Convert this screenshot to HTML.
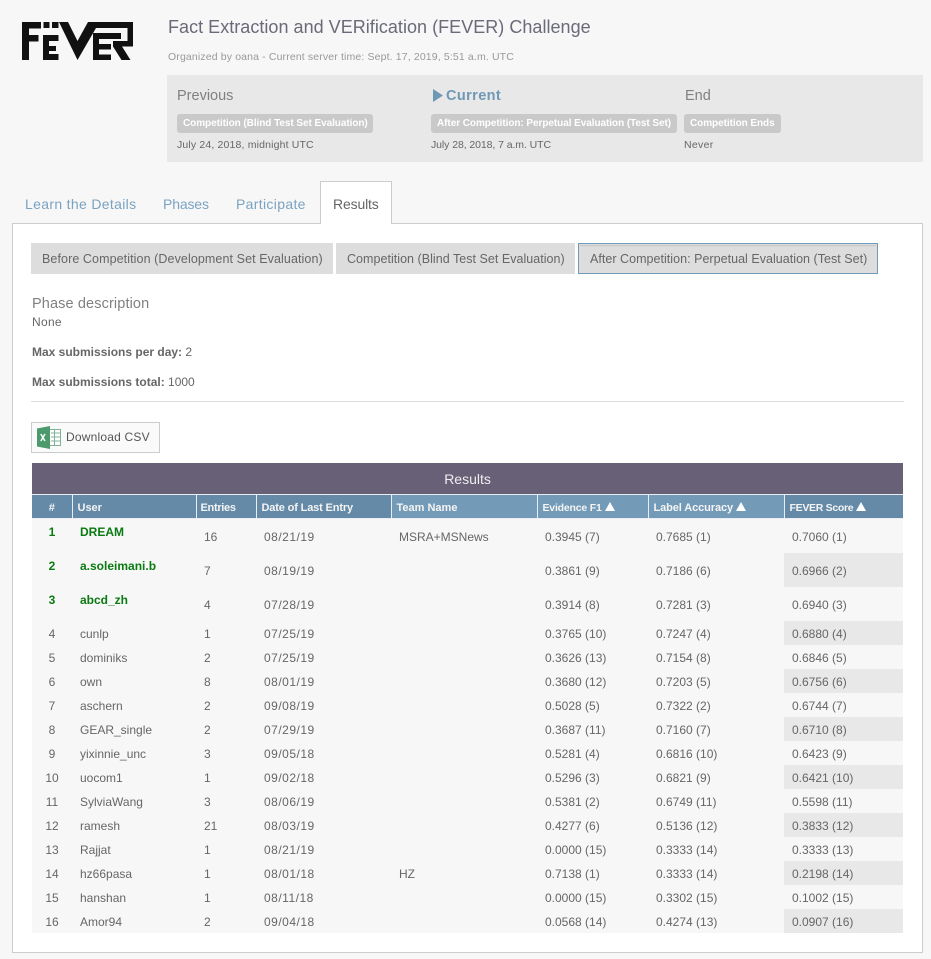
<!DOCTYPE html>
<html><head><meta charset="utf-8"><title>FEVER</title>
<style>
html,body{margin:0;padding:0;background:#f7f7f7}
body{width:931px;height:959px;position:relative;overflow:hidden;font-family:"Liberation Sans",sans-serif;color:#666;font-size:12px}
.a{position:absolute;white-space:nowrap}
.badge{position:absolute;height:19px;top:114px;background:#c9c9c9;border-radius:3px;color:#fff;font-weight:bold;font-size:10px;line-height:20px;padding-left:6px;box-sizing:border-box;white-space:nowrap;letter-spacing:-.06px}
.btn{position:absolute;top:243px;height:31px;background:#ddd;color:#666;font-size:12.5px;line-height:33px;box-sizing:border-box;white-space:nowrap}
table{position:absolute;left:32px;top:463px;width:871px;border-collapse:collapse;table-layout:fixed;background:#f7f7f7}
td,th{padding:0;white-space:nowrap;overflow:visible}
.t{height:31px;background:#676077;color:#eee;font-weight:normal;font-size:14px;text-align:center;border-bottom:1px solid #e8eef3}
.h th{height:24px;color:#f4f4f4;font-size:11px;font-weight:bold;text-align:left;padding:2px 0 0 5px;background:#648aa8;border-left:1px solid #e8eef3;border-bottom:1px solid #e8eef3;box-sizing:border-box}
.h th:first-child{border-left:0;text-align:center;padding:2px 0 0}
.h .l{background:#739bb8}
.tri{display:inline-block;width:0;height:0;border-left:5.5px solid transparent;border-right:5.5px solid transparent;border-bottom:9px solid #fff;margin-left:3px;vertical-align:0}
tbody tr td{height:24px;color:#666;line-height:22px;padding-top:2px;box-sizing:border-box}
tbody tr.b td{height:34px}
td:nth-child(1){text-align:center}
td:nth-child(2){padding-left:8px}
td:nth-child(3){padding-left:8px}
td:nth-child(4){padding-left:8px;letter-spacing:.5px}
td:nth-child(5){padding-left:8px}
td:nth-child(6),td:nth-child(7),td:nth-child(8){padding-left:8px}
tr.s td:nth-child(8){background:#e8e8e8}
tr.b td:nth-child(1),tr.b td:nth-child(2){color:#0a7a12;position:relative;top:-5px;font-weight:bold}
</style></head><body>

<svg class="a" style="left:0;top:0" width="140" height="70" viewBox="0 0 140 70">
<path fill="#111" d="M22 22H41V28.500H29V35H38.500V41.500H29V60H22Z"/>
<path fill="#111" d="M43.500 22H49.500V28H43.500ZM52 22H58.500V28H52ZM43 35H58.500V41H49V46H56V51H49V54H58.500V60H43Z"/>
<path fill="#111" d="M59 22H68L77.500 41L88 22H133V46.500H122L130.500 60H121.500L113 46.500V41H127.500V28H96L77.500 60Z"/>
<path fill="#111" d="M93 33H121V39H99V44H111V49.500H99V54.500H111V60H93Z"/>
</svg>

<div class="a" style="left:168px;top:16px;font-size:18px;line-height:22px;color:#6a6a78;letter-spacing:.03px">Fact Extraction and VERification (FEVER) Challenge</div>
<div class="a" style="left:168px;top:50px;font-size:10.5px;line-height:14px;color:#999;letter-spacing:.14px">Organized by oana - Current server time: Sept. 17, 2019, 5:51 a.m. UTC</div>

<div class="a" style="left:167px;top:75px;width:756px;height:87px;background:#e8e8e8"></div>
<div class="a" style="left:177px;top:87px;font-size:14.5px;line-height:19px;color:#808080">Previous</div>
<svg class="a" style="left:433px;top:89px" width="10" height="13"><path fill="#6f98b5" d="M0 0L10 6.5L0 13Z"/></svg>
<div class="a" style="left:446px;top:87px;font-size:14.5px;line-height:19px;color:#6f98b5;font-weight:bold;letter-spacing:.4px">Current</div>
<div class="a" style="left:685px;top:87px;font-size:14.5px;line-height:19px;color:#808080">End</div>
<div class="badge" style="left:177px;width:196px">Competition (Blind Test Set Evaluation)</div>
<div class="badge" style="left:431px;width:246px">After Competition: Perpetual Evaluation (Test Set)</div>
<div class="badge" style="left:684px;width:97px">Competition Ends</div>
<div class="a" style="left:177px;top:138px;font-size:10.5px;line-height:14px;color:#666;letter-spacing:.16px">July 24, 2018, midnight UTC</div>
<div class="a" style="left:431px;top:138px;font-size:10.5px;line-height:14px;color:#666;letter-spacing:-.08px">July 28, 2018, 7 a.m. UTC</div>
<div class="a" style="left:684px;top:138px;font-size:10.5px;line-height:14px;color:#666;letter-spacing:.3px">Never</div>

<div class="a" style="left:12px;top:223px;width:911px;height:730px;background:#fff;border:1px solid #ccc;box-sizing:border-box"></div>
<div class="a" style="left:320px;top:181px;width:72px;height:43px;background:#fff;border:1px solid #ccc;border-bottom:0;box-sizing:border-box"></div>
<div class="a" style="left:25px;top:195px;font-size:14px;line-height:19px;color:#7ba3c0;letter-spacing:.33px">Learn the Details</div>
<div class="a" style="left:163px;top:195px;font-size:14px;line-height:19px;color:#7ba3c0;letter-spacing:-.15px">Phases</div>
<div class="a" style="left:236px;top:195px;font-size:14px;line-height:19px;color:#7ba3c0;letter-spacing:.33px">Participate</div>
<div class="a" style="left:333px;top:195px;font-size:14px;line-height:19px;color:#666;letter-spacing:-.15px">Results</div>

<div class="btn" style="left:31px;width:302px;padding-left:11px;letter-spacing:.09px">Before Competition (Development Set Evaluation)</div>
<div class="btn" style="left:336px;width:239px;padding-left:11px;letter-spacing:.03px">Competition (Blind Test Set Evaluation)</div>
<div class="btn" style="left:578px;width:300px;padding-left:11px;border:1px solid #6e9abb;box-shadow:inset 0 0 0 1px #ddd,inset 0 2px 1px #c4c4c4;line-height:31px;letter-spacing:.03px">After Competition: Perpetual Evaluation (Test Set)</div>

<div class="a" style="left:32px;top:295px;font-size:14.5px;line-height:19px;color:#808080;letter-spacing:.12px">Phase description</div>
<div class="a" style="left:32px;top:315px;line-height:15px;letter-spacing:.3px">None</div>
<div class="a" style="left:32px;top:345px;line-height:15px"><b>Max submissions per day:</b> 2</div>
<div class="a" style="left:32px;top:375px;line-height:15px"><b>Max submissions total:</b> 1000</div>
<div class="a" style="left:31px;top:401px;width:873px;height:1px;background:#ddd"></div>

<div class="a" style="left:31px;top:422px;width:129px;height:31px;background:#fafafa;border:1px solid #ccc;box-sizing:border-box"></div>
<svg class="a" style="left:37px;top:426px" width="24" height="23" viewBox="0 0 24 23">
<path fill="#fff" stroke="#7fb394" d="M10 3.500H23.500V19.500H10Z"/>
<path stroke="#7fb394" fill="none" d="M14 7H23M14 11H23M14 15H23M17.500 4V19"/>
<path fill="#4c9a6c" d="M0 2.500L13 0V23L0 20.500Z"/>
<path stroke="#fff" stroke-width="1.400" fill="none" d="M3.800 8L8 15M8 8L3.800 15"/>
</svg>
<div class="a" style="left:66px;top:430px;line-height:15px;color:#555;letter-spacing:.2px">Download CSV</div>

<table>
<colgroup><col style="width:40px"><col style="width:124px"><col style="width:60px"><col style="width:135px"><col style="width:146px"><col style="width:111px"><col style="width:136px"><col style="width:119px"></colgroup>
<thead>
<tr><th class="t" colspan="8">Results</th></tr>
<tr class="h"><th>#</th><th>User</th><th style="padding-left:4px;letter-spacing:-.3px">Entries</th><th style="letter-spacing:-.15px">Date of Last Entry</th><th class="l">Team Name</th><th class="l" style="font-size:10.500px;letter-spacing:-.2px">Evidence F1<span class="tri"></span></th><th class="l" style="letter-spacing:-.1px">Label Accuracy<span class="tri"></span></th><th style="font-size:10.500px;letter-spacing:-.3px">FEVER Score<span class="tri"></span></th></tr>
</thead>
<tbody>
<tr class="b"><td>1</td><td>DREAM</td><td>16</td><td>08/21/19</td><td>MSRA+MSNews</td><td>0.3945 (7)</td><td>0.7685 (1)</td><td>0.7060 (1)</td></tr>
<tr class="b s"><td>2</td><td>a.soleimani.b</td><td>7</td><td>08/19/19</td><td></td><td>0.3861 (9)</td><td>0.7186 (6)</td><td>0.6966 (2)</td></tr>
<tr class="b"><td>3</td><td>abcd_zh</td><td>4</td><td>07/28/19</td><td></td><td>0.3914 (8)</td><td>0.7281 (3)</td><td>0.6940 (3)</td></tr>
<tr class="s"><td>4</td><td>cunlp</td><td>1</td><td>07/25/19</td><td></td><td>0.3765 (10)</td><td>0.7247 (4)</td><td>0.6880 (4)</td></tr>
<tr><td>5</td><td>dominiks</td><td>2</td><td>07/25/19</td><td></td><td>0.3626 (13)</td><td>0.7154 (8)</td><td>0.6846 (5)</td></tr>
<tr class="s"><td>6</td><td>own</td><td>8</td><td>08/01/19</td><td></td><td>0.3680 (12)</td><td>0.7203 (5)</td><td>0.6756 (6)</td></tr>
<tr><td>7</td><td>aschern</td><td>2</td><td>09/08/19</td><td></td><td>0.5028 (5)</td><td>0.7322 (2)</td><td>0.6744 (7)</td></tr>
<tr class="s"><td>8</td><td>GEAR_single</td><td>2</td><td>07/29/19</td><td></td><td>0.3687 (11)</td><td>0.7160 (7)</td><td>0.6710 (8)</td></tr>
<tr><td>9</td><td>yixinnie_unc</td><td>3</td><td>09/05/18</td><td></td><td>0.5281 (4)</td><td>0.6816 (10)</td><td>0.6423 (9)</td></tr>
<tr class="s"><td>10</td><td>uocom1</td><td>1</td><td>09/02/18</td><td></td><td>0.5296 (3)</td><td>0.6821 (9)</td><td>0.6421 (10)</td></tr>
<tr><td>11</td><td>SylviaWang</td><td>3</td><td>08/06/19</td><td></td><td>0.5381 (2)</td><td>0.6749 (11)</td><td>0.5598 (11)</td></tr>
<tr class="s"><td>12</td><td>ramesh</td><td>21</td><td>08/03/19</td><td></td><td>0.4277 (6)</td><td>0.5136 (12)</td><td>0.3833 (12)</td></tr>
<tr><td>13</td><td>Rajjat</td><td>1</td><td>08/21/19</td><td></td><td>0.0000 (15)</td><td>0.3333 (14)</td><td>0.3333 (13)</td></tr>
<tr class="s"><td>14</td><td>hz66pasa</td><td>1</td><td>08/01/18</td><td>HZ</td><td>0.7138 (1)</td><td>0.3333 (14)</td><td>0.2198 (14)</td></tr>
<tr><td>15</td><td>hanshan</td><td>1</td><td>08/11/18</td><td></td><td>0.0000 (15)</td><td>0.3302 (15)</td><td>0.1002 (15)</td></tr>
<tr class="s"><td>16</td><td>Amor94</td><td>2</td><td>09/04/18</td><td></td><td>0.0568 (14)</td><td>0.4274 (13)</td><td>0.0907 (16)</td></tr>
</tbody>
</table>
</body></html>
